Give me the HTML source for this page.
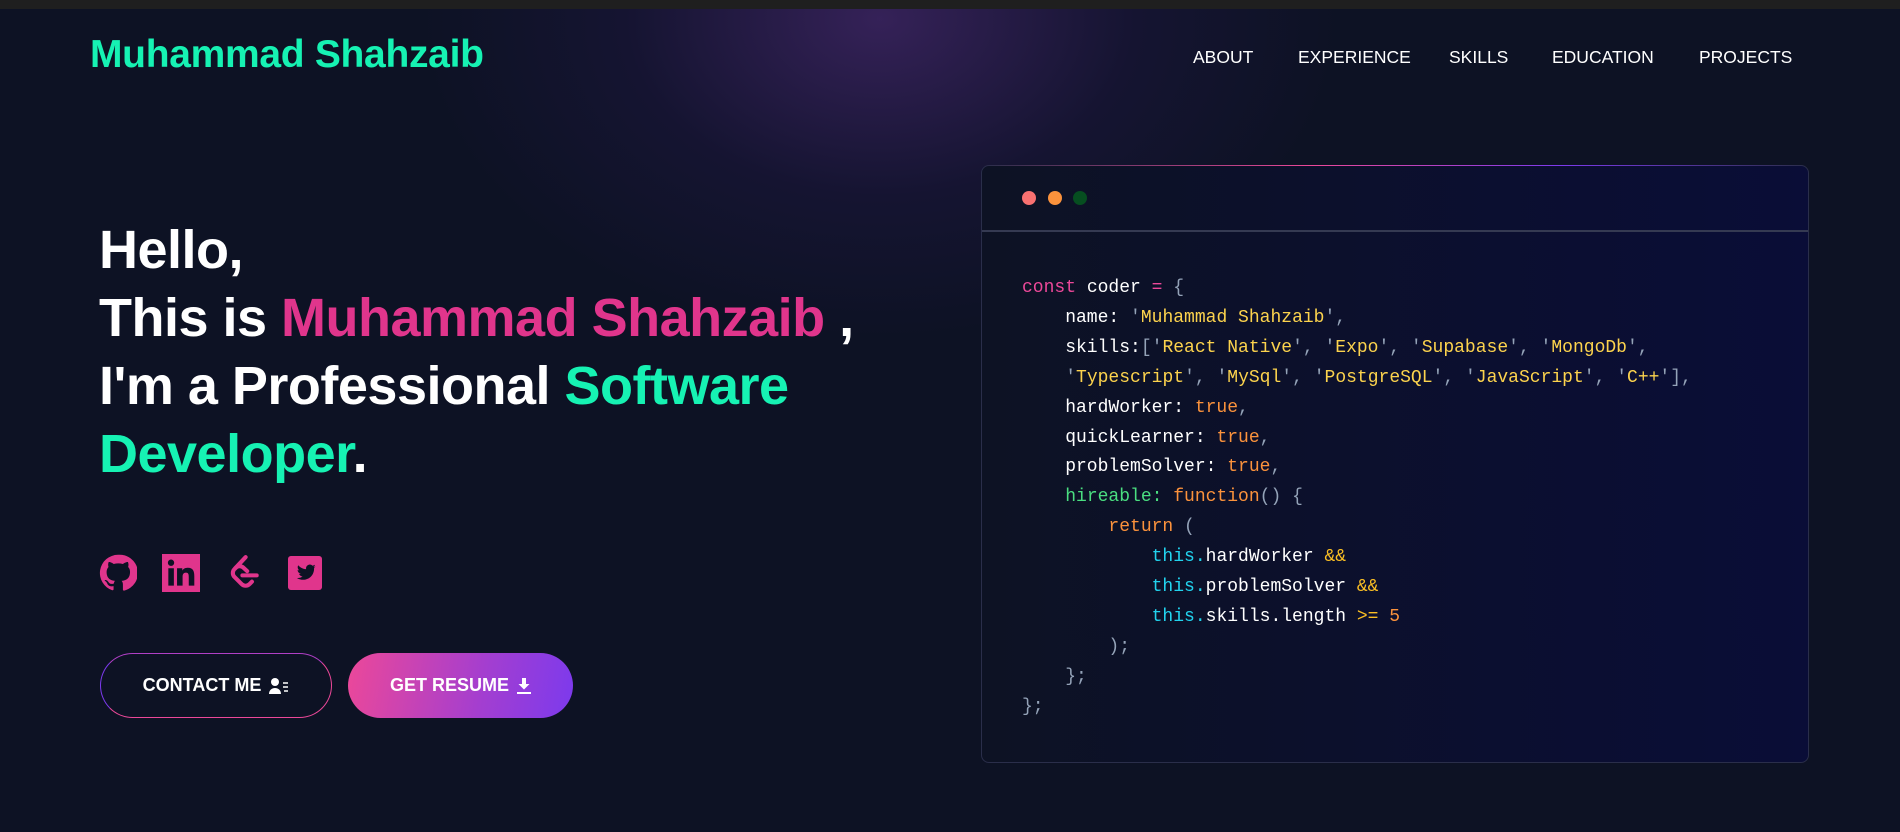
<!DOCTYPE html>
<html><head><meta charset="utf-8"><style>
*{margin:0;padding:0;box-sizing:border-box}
body{width:1900px;height:832px;overflow:hidden;background:#0d1224;font-family:"Liberation Sans",sans-serif;position:relative}
.top{position:absolute;left:0;top:0;width:1900px;height:9px;background:#1f1f1f}
.glow{position:absolute;left:0;top:9px;width:1900px;height:823px;background:radial-gradient(ellipse 460px 320px at 880px 10px,rgba(70,40,110,.7),rgba(40,25,80,.3) 55%,rgba(13,18,36,0) 100%)}
.logo{position:absolute;left:90px;top:33px;font-size:39px;font-weight:bold;color:#16f2b3;letter-spacing:-0.3px}
nav a{position:absolute;top:47px;color:#fff;font-size:17.5px;text-decoration:none}
h1{position:absolute;left:99px;top:216px;font-size:54px;line-height:68px;color:#fff;font-weight:bold;letter-spacing:-0.5px}
.p{color:#e0358c}.g{color:#16f2b3}
.ic{position:absolute;top:554px;width:38px;height:38px}
.btn{position:absolute;top:653px;height:65px;border-radius:33px;color:#fff;font-weight:bold;font-size:18px;display:flex;align-items:center;justify-content:center;gap:8px}
.b1{left:100px;width:232px;border:1.5px solid #ec4899;border-left-color:#7c3aed;border-top-color:#b03fc6}
.b2{left:348px;width:225px;background:linear-gradient(100deg,#ec4899,#a33ed0 60%,#7c3aed)}
.card{position:absolute;left:981px;top:165px;width:828px;height:598px;border:1px solid #2a2e4a;border-radius:8px;background:linear-gradient(90deg,#0d1224,#0a0d37)}
.card:before{content:"";position:absolute;left:0;right:0;top:-1px;height:1px;background:linear-gradient(90deg,transparent,#ec4899 40%,#7c3aed 70%,transparent)}
.hd{height:66px;border-bottom:2px solid #353a52;position:relative}
.dot{position:absolute;top:25px;width:14px;height:14px;border-radius:50%}
pre{position:absolute;left:40px;top:108px;font-family:"Liberation Mono",monospace;font-size:18px;line-height:29.9px;color:#fff;letter-spacing:0}
.k{color:#ec4899}.s{color:#fcd34d}.o{color:#fb923c}.gr{color:#4ade80}.c{color:#22d3ee}.m{color:#94a3b8}.y{color:#fbbf24}
</style></head><body>
<div class="top"></div><div class="glow"></div>
<div class="logo">Muhammad Shahzaib</div>
<nav><a style="left:1193px">ABOUT</a><a style="left:1298px">EXPERIENCE</a><a style="left:1449px">SKILLS</a><a style="left:1552px">EDUCATION</a><a style="left:1699px">PROJECTS</a></nav>
<h1>Hello,<br>This is <span class="p">Muhammad Shahzaib</span> ,<br>I'm a Professional <span class="g">Software</span><br><span class="g">Developer</span>.</h1>
<svg class="ic" style="left:99px" viewBox="0 0 24 24"><path fill="#e0358c" d="M12 .5a11.5 11.5 0 0 0-3.6 22.4c.6.1.8-.3.8-.6v-2c-3.2.7-3.9-1.5-3.9-1.5-.5-1.3-1.3-1.700-1.3-1.7-1-.7.1-.7.1-.7 1.2.1 1.8 1.2 1.8 1.2 1 1.8 2.8 1.3 3.5 1 .1-.8.4-1.3.7-1.6-2.6-.3-5.3-1.3-5.3-5.7 0-1.3.5-2.3 1.2-3.1-.1-.3-.5-1.5.1-3.1 0 0 1-.3 3.2 1.2a11 11 0 0 1 5.8 0c2.2-1.5 3.2-1.2 3.2-1.2.6 1.6.2 2.8.1 3.1.8.8 1.2 1.8 1.2 3.1 0 4.4-2.7 5.4-5.3 5.7.4.4.8 1.1.8 2.2v3.3c0 .3.2.7.8.6A11.5 11.5 0 0 0 12 .5z"/></svg>
<svg class="ic" style="left:162px" viewBox="0 0 24 24"><path fill="#e0358c" d="M0 0h24v24H0z"/><path fill="#0d1224" d="M4 9h3.5v11H4zM5.7 3.5a2 2 0 1 1 0 4 2 2 0 0 1 0-4zM9.5 9h3.3v1.5c.5-.9 1.6-1.8 3.4-1.8 3.5 0 4.2 2.3 4.2 5.3v6h-3.5v-5.3c0-1.3 0-2.9-1.8-2.9s-2.100 1.4-2.100 2.8V20H9.5z"/></svg>
<svg class="ic" style="left:225px" viewBox="0 0 24 24" fill="none" stroke="#e0358c" stroke-width="2.6" stroke-linecap="round" stroke-linejoin="round"><path d="M13 2 6 9.5a3.5 3.5 0 0 0 0 5l4.5 4.5a3.5 3.5 0 0 0 5 0l1.5-1.5"/><path d="M6.5 9a3.5 3.5 0 0 1 5-.5l2.5 2.3"/><path d="M11 13.5h9"/></svg>
<svg class="ic" style="left:288px;top:556px;width:34px;height:34px" viewBox="0 0 24 24"><rect width="24" height="24" rx="2" fill="#e0358c"/><path fill="#0d1224" d="M19.5 7.3c-.5.2-1 .4-1.6.4.6-.3 1-.9 1.2-1.5-.5.3-1.100.5-1.7.7a2.7 2.7 0 0 0-4.6 2.4c-2.2-.1-4.2-1.2-5.6-2.8-.7 1.3-.3 2.8.8 3.6-.4 0-.9-.1-1.2-.3 0 1.3.9 2.4 2.2 2.7-.4.1-.8.1-1.2 0 .3 1.1 1.4 1.9 2.5 1.9-1.1.9-2.6 1.3-4 1.1 5.6 3.5 12.5-.4 12.1-7.2.5-.3.9-.8 1.1-1z"/></svg>
<div class="btn b1">CONTACT ME <svg width="20" height="18" viewBox="0 0 20 18"><circle cx="6" cy="5" r="4" fill="#fff"/><path d="M0 17c0-4 3-6 6-6s6 2 6 6z" fill="#fff"/><path d="M14 6h5M14 10h5M15 14h4" stroke="#fff" stroke-width="1.6"/></svg></div>
<div class="btn b2">GET RESUME <svg width="14" height="16" viewBox="0 0 14 16"><path d="M5 0h4v6h3.5L7 11.5 1.5 6H5z M0 14h14v2H0z" fill="#fff"/></svg></div>
<div class="card"><div class="hd"><div class="dot" style="left:40px;background:#f87171"></div><div class="dot" style="left:66px;background:#fb923c"></div><div class="dot" style="left:91px;background:#064e20"></div></div>
<pre><span class="k">const</span> coder <span class="k">=</span> <span class="m">{</span>
    name: <span class="m">'</span><span class="s">Muhammad Shahzaib</span><span class="m">',</span>
    skills:<span class="m">['</span><span class="s">React Native</span><span class="m">', '</span><span class="s">Expo</span><span class="m">', '</span><span class="s">Supabase</span><span class="m">', '</span><span class="s">MongoDb</span><span class="m">',</span>
    <span class="m">'</span><span class="s">Typescript</span><span class="m">', '</span><span class="s">MySql</span><span class="m">', '</span><span class="s">PostgreSQL</span><span class="m">', '</span><span class="s">JavaScript</span><span class="m">', '</span><span class="s">C++</span><span class="m">'],</span>
    hardWorker: <span class="o">true</span><span class="m">,</span>
    quickLearner: <span class="o">true</span><span class="m">,</span>
    problemSolver: <span class="o">true</span><span class="m">,</span>
    <span class="gr">hireable:</span> <span class="o">function</span><span class="m">() {</span>
        <span class="o">return</span> <span class="m">(</span>
            <span class="c">this.</span>hardWorker <span class="y">&amp;&amp;</span>
            <span class="c">this.</span>problemSolver <span class="y">&amp;&amp;</span>
            <span class="c">this.</span>skills.length <span class="y">&gt;=</span> <span class="o">5</span>
        <span class="m">);</span>
    <span class="m">};</span>
<span class="m">};</span></pre></div>
</body></html>
